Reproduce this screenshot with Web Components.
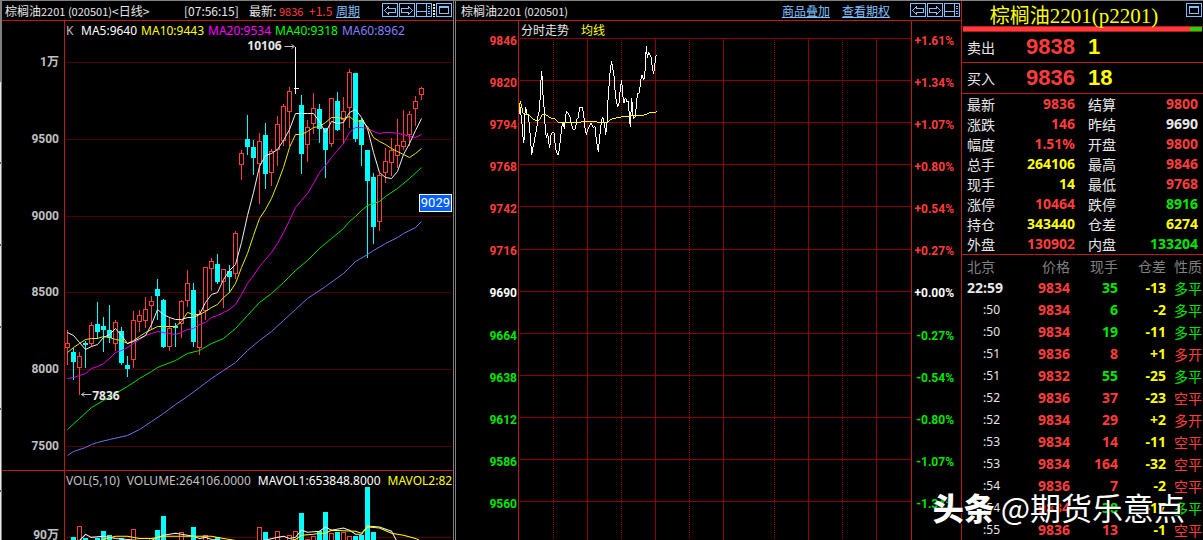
<!DOCTYPE html>
<html lang="zh-CN">
<head>
<meta charset="utf-8">
<title>棕榈油2201 行情</title>
<style>
:root{--line:#c01818;--grid:#900000;--red:#ff3c3c;--green:#00e600;--yellow:#ffff00;--white:#e8e8e8;--silver:#c0c0c0;--blue:#80c0ff;--cyan:#00ffff;
--cjk:"Noto Sans CJK SC",sans-serif;--num:Roboto,"Noto Sans CJK SC",sans-serif;--wide:"Noto Sans","Noto Sans CJK SC",sans-serif}
body{margin:0;background:#000;color:var(--white);font:12px/14px var(--cjk)}
</style>
</head>
<body>
<trading-desk></trading-desk>
<script>
const define = (name, html, setup) => {
  const t = document.createElement('template');
  t.innerHTML = html;
  customElements.define(name, class extends HTMLElement {
    constructor() {
      super();
      this.attachShadow({mode: 'open'}).append(t.content.cloneNode(true));
    }
    connectedCallback() { if (setup) setup(this, this.shadowRoot); }
  });
};

/* toolbar glyphs */
const glyphs = {
  left: '<path d="M2.5 7.5L6.5 3.5V5.5H13.5V9.5H6.5V11.5Z"/>',
  right: '<path d="M13.5 7.5L9.5 3.5V5.5H2.5V9.5H9.5V11.5Z"/>',
  split: '<path d="M1 8.5H11M10.5 1V13M12 3.5H14M12 5.5H14M12 8.5H14M12 10.5H14"/>',
  window: '<path d="M3.5 3.5H12.5V10.5H3.5ZM3 4.5H13"/>'
};
const names = {left: '上一个', right: '下一个', split: '分栏', window: '窗口'};
define('tool-button', `<style>
:host{display:block;height:14px}
button{display:block;margin:0;padding:0;border:0;background:#000;width:16px;height:14px;cursor:pointer}
svg{display:block;fill:none;stroke:var(--blue)}
</style><button type="button"><svg width="16" height="14" shape-rendering="crispEdges"></svg></button>`, (el, r) => {
  const n = el.getAttribute('icon');
  r.querySelector('button').setAttribute('aria-label', names[n]);
  r.querySelector('svg').innerHTML = '<rect x=".5" y=".5" width="15" height="13"/>' + glyphs[n];
});

define('pane-header', `<style>
:host{display:flex;align-items:center;height:19px;padding-left:5px;border-bottom:1px solid var(--line);white-space:pre;overflow:hidden}
.tools{display:flex;gap:1px;margin-left:auto;padding-right:1px;padding-bottom:1px}
</style><slot></slot><div class="tools"><slot name="tools"></slot></div>`);

define('price-axis', `<style>
:host{display:flex;flex-direction:column;justify-content:space-between;text-align:right;font:bold 12px/14px var(--num)}
</style><slot></slot>`);

const series = pts => pts.map(p => p.join()).join(' ');
const X = i => 67 + i * 6;
/* [high, body top, body bottom, low, rising] in chart units */
const candles = [
[329,343,347,364,1],[347,352,361,379,0],[351,356,367,394,1],[340,343,344,367,0],[321,325,343,345,1],[301,324,331,338,0],
[316,326,329,351,0],[304,330,337,342,0],[319,322,343,350,1],[326,331,362,364,0],[355,365,368,376,0],[310,320,359,367,1],
[309,315,321,331,1],[296,309,320,327,1],[295,301,305,329,1],[278,289,295,319,0],[298,300,346,347,0],[316,328,346,350,1],
[322,326,327,346,0],[299,301,323,337,1],[269,283,300,306,1],[282,290,341,346,0],[309,314,347,354,1],[266,267,310,319,1],
[257,261,268,290,1],[253,264,281,283,0],[268,269,281,307,1],[264,271,276,292,0],[230,233,273,278,1],[149,153,164,179,1],
[114,139,146,154,0],[139,147,157,174,0],[132,141,163,203,1],[122,135,173,188,0],[148,151,172,185,1],[115,124,149,165,1],
[103,106,140,145,1],[86,91,111,145,1],null,[94,105,153,173,0],[119,127,144,161,1],[92,108,123,133,1],
[103,109,128,142,0],[127,128,149,177,0],[97,98,143,146,1],[91,101,129,130,0],[96,111,119,143,1],[68,72,107,127,1],
[72,73,138,141,0],[117,120,144,165,0],[149,150,180,257,0],[172,177,226,243,0],[172,175,221,230,1],[147,161,172,182,1],
[137,150,162,175,1],[118,145,155,167,1],[109,141,146,149,1],[110,114,134,145,1],[95,101,108,125,1],[86,88,94,99,1]];
const daily = ys => series(ys.map((y, i) => [X(i), y]));
const sparse = o => series(Object.entries(o).map(([i, y]) => [X(+i), y]));
const ma5 = daily([332,335,342,349,346,344,337,334,328,335,343,341,338,335,324,309,314,317,319,319,317,317,314,302,294,292,279,270,264,242,215,192,166,155,153,149,140,129,113,113,113,113,121,132,121,123,122,112,109,117,128,152,172,177,178,171,154,143,130,118]);
const ma10 = daily([352,347,343,339,338,338,336,337,339,340,343,340,336,332,329,326,326,326,326,321,312,314,314,311,307,304,297,292,283,267,253,235,218,209,198,183,167,147,134,134,131,127,126,122,117,117,118,116,121,120,126,137,141,144,148,151,154,157,153,148]);
const ma20 = daily([378,377,375,373,368,366,363,358,352,350,347,343,339,335,333,331,332,333,334,332,329,328,324,322,317,315,312,309,304,294,283,275,266,259,252,243,232,220,207,200,193,183,172,165,157,150,143,132,127,127,128,131,133,132,132,133,134,136,137,134]);
const ma40 = sparse({0:429,2:418,4:407,6:400,8:393,10:386,12:378,14:371,15:367,18:360,20:353,22:350,24:343,26:338,28:328,30:315,32:302,34:293,36:282,38:270,40:260,42:248,44:238,46:228,47:221,48:216,49:210,50:205,51:203,52:201,53:196,55:188,57:178,59:167});
const ma60 = sparse({0:455,1:451,3:447,4:444,5:442,7:439,10:435,12:429,14:421,16:413,18:404,20:396,22:387,24:378,26:370,28:362,30:350,32:340,34:331,36:320,38:309,40:298,41:294,43:286,46:273,48:261,50:254,51:250,53:243,55:237,56:233,58:227,59:221});

define('kline-chart', `<style>
:host{display:block;position:relative;min-width:0;overflow:hidden}
svg{position:absolute;inset:0;width:100%;height:100%}
.legend{position:relative;display:flex;gap:4px;padding:3px 1px;font:12px/14px var(--wide);white-space:nowrap}
.k{color:var(--silver);width:11px}
.note{position:absolute;font:bold 12px/14px var(--wide)}
.peak{left:47%;top:4%}.low{left:7%;top:82%}
.tag{position:absolute;right:1px;top:173px;border:1px solid #fff;background:#0060ff;color:#fff;font:13px/16px var(--num);padding:0 1px}
</style><svg viewBox="65 21 388 449" preserveAspectRatio="none" aria-hidden="true"></svg>
<div class="legend"><span class="k">K</span><span style="color:#fff">MA5:9640</span><span style="color:#ff0">MA10:9443</span><span style="color:#f0f">MA20:9534</span><span style="color:#0f0">MA40:9318</span><span style="color:#8080ff">MA60:8962</span></div>
<span class="note peak">10106</span><span class="note low">7836</span><span class="tag">9029</span>`, (el, r) => {
  const grid = [62,139,216,292,369,446].map(y => `<path d="M66 ${y}H451"/>`).join('');
  const bars = candles.map((c, i) => {
    if (!c) return '';
    const [h, t, b, l, up] = c, x = X(i), k = up ? '#ff3c3c' : '#00ffff';
    return `<g stroke="${k}" fill="${up ? '#000' : k}"><path d="M${x} ${h}V${l}"/><rect x="${x-2}" y="${t}" width="4" height="${b-t}"/></g>`;
  }).join('');
  const line = (p, c) => `<polyline points="${p}" stroke="${c}"/>`;
  r.querySelector('svg').innerHTML = `<g transform="translate(.5 .5)" fill="none" stroke-width="1">
<g stroke="#a00000" stroke-dasharray="1 1">${grid}</g><g shape-rendering="crispEdges">${bars}
<path stroke="#fff" d="M295 46V93M293 88H298"/></g>
<path stroke="#c0c0c0" d="M284 46H293M291 44L294 46L291 48M81 394H91M84 392L81 394L84 396"/>
${line(ma60,'#7070e8')}${line(ma40,'#00e000')}${line(ma20,'#e000e0')}${line(ma10,'#e8e800')}${line(ma5,'#f0f0f0')}</g>`;
});

/* [bar index, top, rising] */
const volumes = [[0,538,1],[1,535,0],[2,524,1],[3,536,0],[5,536,0],[6,529,0],[7,533,0],[9,536,0],[10,538,0],[11,527,1],[14,536,1],[15,528,0],[16,515,0],[17,539,1],[19,530,1],[20,538,1],[21,525,0],[23,533,1],[25,535,0],[30,538,0],[32,525,1],[33,530,0],[35,529,1],[36,538,1],[37,533,1],[38,529,1],[39,512,0],[40,537,1],[41,534,1],[42,529,0],[43,511,0],[44,531,1],[45,530,0],[46,530,1],[47,534,1],[48,534,0],[49,533,0],[50,487,0],[51,530,0]];
const vol1 = sparse({1:544,3:532,4:535,6:534,8:536,12:538,14:538,15:535,16:533,18:531,19:532,20:533,21:534,22:536,23:535,24:537,26:538,32:539,35:535,36:534,37:536,38:535,39:528,40:530,42:529,43:525,44:528,46:526,47:528,48:532,49:532,50:524,52:525,54:529,55:540,56:546});
const vol2 = sparse({5:541,6:537,8:534,10:534,12:536,14:536,16:534,20:534,24:534,26:536,28:538,29:540,34:539,37:538,38:537,39:533,41:532,42:531,43:531,44:528,48:529,49:531,50:525,52:526,54:531,56:533,58:536,59:539});
define('volume-chart', `<style>
:host{display:block;position:relative;min-width:0;overflow:hidden}
svg{position:absolute;inset:0;width:100%;height:100%}
.legend{position:relative;display:flex;gap:7px;padding:3px 1px;font:12px/14px var(--wide);white-space:nowrap}
.legend span{color:var(--silver)}.legend .a{color:#fff}.legend .b{color:#ff0}
</style><svg viewBox="65 471 388 69" preserveAspectRatio="none" aria-hidden="true"></svg>
<div class="legend"><span>VOL(5,10)</span><span>VOLUME:264106.0000</span><span class="a">MAVOL1:653848.8000</span><span class="b">MAVOL2:82</span></div>`, (el, r) => {
  r.querySelector('svg').innerHTML = `<g transform="translate(.5 .5)" fill="none"><path d="M66 535H451" stroke="#a00000" stroke-dasharray="1 1"/><g shape-rendering="crispEdges">` +
    volumes.map(([i, t, up]) => `<rect x="${X(i)-2}" y="${t}" width="4" height="60" stroke="${up ? '#ff3c3c' : '#00ffff'}" fill="${up ? '#000' : '#00ffff'}"/>`).join('') +
    `</g><polyline points="${vol1}" stroke="#f0f0f0"/><polyline points="${vol2}" stroke="#ff0"/></g>`;
});

define('daily-pane', `<style>
:host{display:grid;grid-template-rows:20px 450fr 69fr;border-right:1px solid #808080;margin-right:1px;min-width:0;min-height:0;overflow:hidden}
.row{display:grid;grid-template-columns:63px minmax(0,1fr);min-height:0}
.k{border-bottom:1px solid var(--line)}
price-axis{padding:34px 5px 17px 0;color:var(--silver);border-right:1px solid var(--line)}
.row:not(.k) price-axis{padding:57px 5px 0 0}
.la{font-size:11px}.name{width:179px}.clock{width:65px}.last{width:30px}
.red{color:var(--red)}.price{width:30px}.chg{width:27px}
a{color:var(--blue)}
pane-header{padding-left:3px}
</style>
<pane-header><span class="name">棕榈油<span class="la">2201 (020501)</span>&lt;日线&gt;</span><span class="clock">[07:56:15]</span><span class="last">最新:</span><span class="red la price">9836</span><span class="red chg">+1.5</span><a href="#period">周期</a>
<tool-button slot="tools" icon="left"></tool-button><tool-button slot="tools" icon="right"></tool-button><tool-button slot="tools" icon="split"></tool-button><svg slot="tools" width="2" height="14" fill="none" stroke="#e8e8e8" stroke-width="2" stroke-dasharray="2 1" aria-hidden="true"><path d="M1 1V14"/></svg><tool-button slot="tools" icon="window"></tool-button></pane-header>
<div class="row k"><price-axis><span>1万</span><span>9500</span><span>9000</span><span>8500</span><span>8000</span><span>7500</span></price-axis><kline-chart></kline-chart></div>
<div class="row"><price-axis><span>90万</span></price-axis><volume-chart></volume-chart></div>`);

define('minute-chart', `<style>
:host{display:block;position:relative;min-width:0;overflow:hidden;border:solid var(--line);border-width:0 1px}
svg{position:absolute;inset:0;width:100%;height:100%}
.legend{position:relative;display:flex;gap:12px;padding:2px 2px}
.avg{color:#ff0}
</style><svg viewBox="519 21 392 519" preserveAspectRatio="none" aria-hidden="true"></svg>
<div class="legend"><span>分时走势</span><span class="avg">均线</span></div>`, (el, r) => {
  const rows = [...Array(12).keys()].map(i => `M519 ${Math.round(38 + i * 42.1)}H911`).join('');
  /* traces are stored at three units per pixel */
  r.querySelector('svg').innerHTML = `<g transform="translate(.5 .5)" fill="none" stroke="#900000" shape-rendering="crispEdges">
<path d="${rows}"/><path d="${[587,655,723,808,876].map(x => `M${x} 38V545`).join('')}"/>
<path stroke-dasharray="1 1" d="${[553,621,689,774,842].map(x => `M${x} 39V545`).join('')}"/></g>
<g transform="translate(455 0) scale(.33333)" fill="none" stroke-width="3" shape-rendering="crispEdges">
<polyline stroke="#fff" points="192,342 193,325 196,320 198,345 200,358 203,395 205,428 208,415 210,340 212,320 216,345 220,345 223,375 226,410 230,466 234,440 238,425 242,400 246,380 248,350 251,345 253,325 256,290 259,214 262,235 264,285 267,320 270,370 274,415 278,398 281,425 284,445 288,405 292,398 297,398 300,430 304,455 309,466 313,450 317,410 321,378 325,368 328,388 332,345 335,333 340,342 345,350 350,375 354,388 361,388 365,360 370,352 374,320 378,325 382,320 386,345 390,385 394,405 398,390 403,380 408,368 413,382 420,380 424,420 430,457 434,410 438,375 442,350 446,360 449,375 452,405 456,370 459,300 463,245 466,205 470,184 474,210 477,228 480,270 484,305 488,320 492,310 496,265 500,240 503,285 507,310 511,293 516,305 520,303 524,365 526,380 530,293 535,358 540,350 544,320 547,280 553,280 557,240 561,225 566,240 569,235 572,175 574,137 577,175 581,155 584,165 588,170 592,205 596,222 599,195 603,167 606,167"/>
<polyline stroke="#ff0" points="192,330 196,302 200,320 204,340 212,343 222,344 230,355 240,360 252,361 262,343 270,343 280,349 290,356 300,356 310,366 320,367 375,367 380,365 415,364 430,367 455,367 470,357 490,352 525,348 555,348 575,343 585,338 600,337 606,334"/></g>`;
});

define('minute-pane', `<style>
:host{display:grid;grid-template-rows:20px minmax(0,1fr);border-left:1px solid #808080;border-right:1px solid var(--line);min-width:0;min-height:0;overflow:hidden}
.body{display:grid;grid-template-columns:62px minmax(0,1fr) 49px;min-height:0}
price-axis{padding:13px 1px 29px 0;color:var(--red)}
.pct{padding-right:7px}
.eq{color:#fff}.dn{color:var(--green)}
a{color:var(--blue)}
.links{display:flex;flex:1;justify-content:flex-end;gap:12px;margin-right:20px}
.la{font-size:11px}
</style>
<pane-header><span>棕榈油<span class="la">2201 (020501)</span></span><span class="links"><a href="#overlay">商品叠加</a><a href="#option">查看期权</a></span><tool-button slot="tools" icon="left"></tool-button><tool-button slot="tools" icon="right"></tool-button><tool-button slot="tools" icon="split"></tool-button></pane-header>
<div class="body"><price-axis class="abs"></price-axis><minute-chart></minute-chart><price-axis class="pct"></price-axis></div>`, (el, r) => {
  const pct = ['+1.61%','+1.34%','+1.07%','+0.80%','+0.54%','+0.27%','+0.00%','-0.27%','-0.54%','-0.80%','-1.07%','-1.34%'];
  const cls = i => i < 6 ? '' : i === 6 ? 'eq' : 'dn';
  r.querySelector('.pct').innerHTML = pct.map((p, i) => `<span class="${cls(i)}">${p}</span>`).join('');
  r.querySelector('.abs').innerHTML = pct.map((p, i) => `<span class="${cls(i)}">${9846 - 26 * i}</span>`).join('');
});

define('order-row', `<style>
:host{display:grid;grid-template-columns:62px 51px minmax(0,1fr);align-items:center;height:30px;border-bottom:1px solid var(--line);font:bold 22px/30px "Liberation Sans",sans-serif}
.label{font:14px/20px var(--cjk);padding-left:5px}
.price{color:var(--red);text-align:right}.qty{color:var(--yellow);padding-left:13px}
</style><span class="label"><slot></slot></span><span class="price"><slot name="price"></slot></span><span class="qty"><slot name="qty"></slot></span>`);

define('quote-table', `<style>
:host{display:block;border-bottom:1px solid var(--line)}
table{width:100%;table-layout:fixed;border-collapse:collapse}
th{font:14px/20px var(--cjk);text-align:left;padding:0 0 0 5px}
td{font:bold 14px/20px var(--wide);text-align:right;padding:0}
.c1{width:62px}.c2{width:51px}.c3{width:57px}
td+th{padding-left:13px}td:last-child{padding-right:5px}
.r{color:var(--red)}.g{color:var(--green)}.y{color:var(--yellow)}
</style><table><colgroup><col class="c1"><col class="c2"><col class="c3"><col></colgroup><tbody></tbody></table>`, (el, r) => {
  r.querySelector('tbody').innerHTML = [['最新','9836','r','结算','9800','r'],['涨跌','146','r','昨结','9690',''],['幅度','1.51%','r','开盘','9800','r'],['总手','264106','y','最高','9846','r'],['现手','14','y','最低','9768','r'],['涨停','10464','r','跌停','8916','g'],['持仓','343440','y','仓差','6274','y'],['外盘','130902','r','内盘','133204','g']]
    .map(a => `<tr><th scope="row">${a[0]}</th><td class="${a[2]}">${a[1]}</td><th scope="row">${a[3]}</th><td class="${a[5]}">${a[4]}</td></tr>`).join('');
});

define('tick-table', `<style>
:host{display:block}
table{width:100%;table-layout:fixed;border-collapse:collapse}
th{font:14px/22px var(--cjk);color:#808080;text-align:right;padding:0}
th:first-child{text-align:left;padding-left:5px}
td{font:bold 14px/22px var(--wide);text-align:right;padding:0;height:22px}
td:first-child{font:12px/22px var(--wide);padding-right:8px}
tr:first-child td:first-child{font:bold 14px/22px var(--wide);padding-right:5px}
td:last-child{font:14px/22px var(--cjk)}
td:last-child,th:last-child{padding-right:1px}
.c1{width:46px}.c2{width:62px}.c3{width:48px}
.r{color:var(--red)}.g{color:var(--green)}.y{color:var(--yellow)}
</style><table><colgroup><col class="c1"><col class="c2"><col class="c3"><col class="c3"><col></colgroup><thead><tr><th>北京</th><th>价格</th><th>现手</th><th>仓差</th><th>性质</th></tr></thead><tbody></tbody></table>`, (el, r) => {
  r.querySelector('tbody').innerHTML = [['22:59','9834','35','-13','多平'],[':50','9834','6','-2','多平'],[':50','9834','19','-11','多平'],[':51','9836','8','+1','多开'],[':51','9832','55','-25','多平'],[':52','9836','37','-23','空平'],[':52','9834','29','+2','多开'],[':53','9834','14','-11','空平'],[':53','9834','164','-32','空平'],[':54','9836','7','-2','空平'],[':54','9834','38','-17','多平'],[':55','9836','13','-1','空平']]
    .map(a => { const k = a[4] === '多平' ? 'g' : 'r';
      return `<tr><td>${a[0]}</td><td class="r">${a[1]}</td><td class="${k}">${a[2]}</td><td class="y">${a[3]}</td><td class="${k}">${a[4]}</td></tr>`; }).join('');
});

define('quote-pane', `<style>
:host{display:block;overflow:hidden;min-height:0}
.top{display:flex;height:25px;border-bottom:1px solid var(--line)}
h1{flex:1;margin:2px 0 0;text-align:center;font:20px/24px var(--cjk);color:var(--yellow);white-space:nowrap}
h1 span{font:21px/22px "Liberation Serif",serif}
tool-button{margin:2px 1px 0 0}
.ratio{display:flex;height:4px;margin:0 1px;border-bottom:1px solid var(--line);background:var(--red)}
.ratio i{margin-left:auto;width:5%;background:#00e600}
</style>
<div class="top"><h1>棕榈油<span>2201(p2201)</span></h1><tool-button icon="window"></tool-button></div>
<div class="ratio"><i></i></div>
<order-row>卖出<span slot="price">9838</span><span slot="qty">1</span></order-row>
<order-row>买入<span slot="price">9836</span><span slot="qty">18</span></order-row>
<quote-table></quote-table>
<tick-table></tick-table>`);

define('trading-desk', `<style>
:host{display:grid;box-sizing:border-box;position:relative;height:100vh;overflow:hidden;border-top:1px solid #808080;grid-template-columns:2px 453fr 507fr 241px;grid-template-rows:minmax(0,1fr)}
.edge{background:repeating-linear-gradient(#e8e8e8 0 80px,#606060 80px 82px);border-top:81px solid #808080;border-right:1px solid #808080}
.mark{position:absolute;right:18px;bottom:10px;display:flex;align-items:center;gap:6px;color:#fff;font:31px/46px var(--cjk);white-space:nowrap;text-shadow:1px 1px 1px #000}
.mark b{font-weight:900}
</style>
<div class="edge"></div><daily-pane></daily-pane><minute-pane></minute-pane><quote-pane></quote-pane>
<div class="mark"><b>头条</b><span>@期货乐意点</span></div>`);
</script>
</body>
</html>
